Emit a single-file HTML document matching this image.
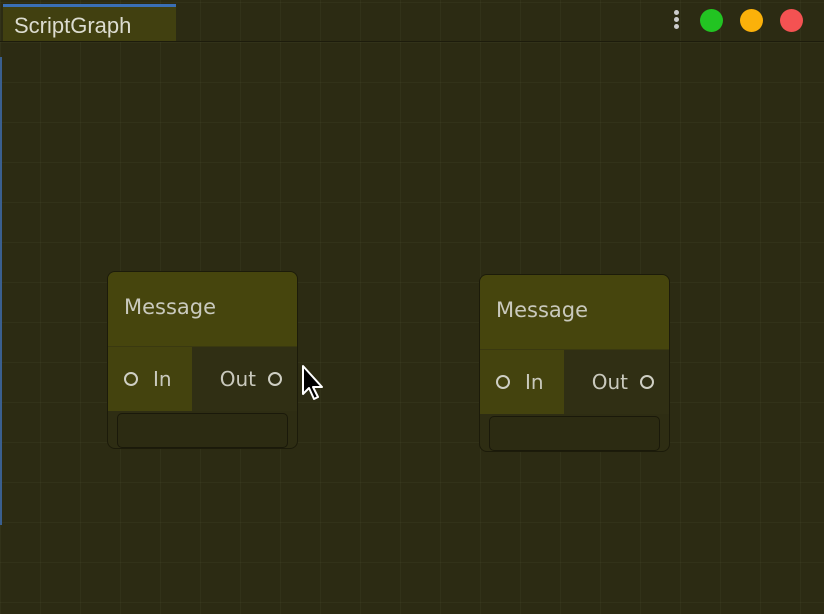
<!DOCTYPE html><html><head><style>
body{margin:0;width:824px;height:614px;overflow:hidden;background:#2c2b13;font-family:"Liberation Sans","DejaVu Sans",sans-serif;position:relative;
background-image:linear-gradient(to right,rgba(90,90,60,.15) 1px,transparent 1px),linear-gradient(to bottom,rgba(90,90,60,.15) 1px,transparent 1px);background-size:40px 40px;background-position:0px 2px}
.tab{position:absolute;left:3px;top:4px;width:173px;height:37px;background:#414010;border-top:3px solid #3a6fb5;box-sizing:border-box;color:#dcdcd0;font-size:22px;padding:6px 0 0 11px}
.bar{position:absolute;left:0;top:41px;width:824px;height:1px;background:#1d1c0c}
.side{position:absolute;left:0;top:57px;width:2px;height:468px;background:#3a5f8f}
.dot{position:absolute;top:9px;width:23px;height:23px;border-radius:50%}
.node{position:absolute;width:191px;height:178px;border:1px solid #1c1b0a;border-radius:8px;background:#2e2d13;box-sizing:border-box;overflow:hidden;font-family:"DejaVu Sans",sans-serif}
.hd{height:75px;background:#46450d;color:#c9c9bd;font-size:21px;padding:23px 0 0 16px;box-sizing:border-box;border-bottom:1px solid #3a3910}
.row{height:64px;display:flex;color:#c9c9bd;font-size:20px}
.in{width:84px;background:#44430e;display:flex;align-items:center;padding-left:16px;box-sizing:border-box}
.out{flex:1;background:#302f14;display:flex;align-items:center;justify-content:flex-end;padding-right:15px}
.c{width:14px;height:14px;border:2px solid #cfcfc4;border-radius:50%;box-sizing:border-box;display:inline-block}
.ft{position:absolute;left:9px;right:9px;top:141px;height:33px;border:1px solid #1a190a;border-radius:5px;background:#2c2b12}
</style></head><body>
<div class="tab">ScriptGraph</div><div class="bar"></div><div class="side"></div>
<div style="position:absolute;left:674px;top:10px;width:5px">
<div style="width:5px;height:5px;border-radius:50%;background:#ccc;margin-bottom:2px"></div><div style="width:5px;height:5px;border-radius:50%;background:#ccc;margin-bottom:2px"></div><div style="width:5px;height:5px;border-radius:50%;background:#ccc"></div></div>
<div class="dot" style="left:700px;background:#22c422"></div>
<div class="dot" style="left:740px;background:#fbb10a"></div>
<div class="dot" style="left:780px;background:#f45252"></div>

<div class="node" style="left:107px;top:271px"><div class="hd">Message</div>
<div class="row"><div class="in"><span class="c"></span><span style="margin-left:15px">In</span></div><div class="out"><span style="margin-right:12px">Out</span><span class="c"></span></div></div><div class="ft"></div></div>

<div class="node" style="left:479px;top:274px"><div class="hd">Message</div>
<div class="row"><div class="in"><span class="c"></span><span style="margin-left:15px">In</span></div><div class="out"><span style="margin-right:12px">Out</span><span class="c"></span></div></div><div class="ft"></div></div>

<svg style="position:absolute;left:301px;top:364px" width="26" height="38" viewBox="0 0 26 38"><path d="M2 2 L2 30 L8 24 L13 35 L17 33 L12 23 L21 23 Z" fill="#000" stroke="#fff" stroke-width="2" stroke-linejoin="round"/></svg>
</body></html>
